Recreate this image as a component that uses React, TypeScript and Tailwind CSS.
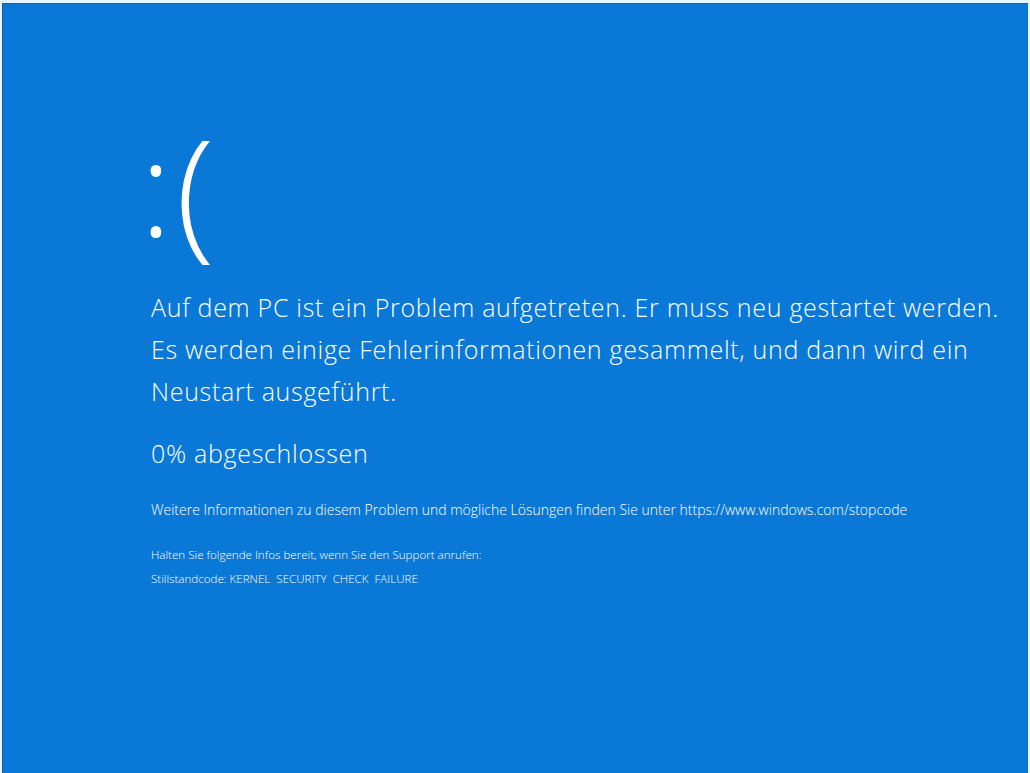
export default function App() {
  return (
    <div className="h-[773px] w-[1030px] overflow-hidden bg-[#e8f6fb] pl-[2px] pr-[2px] pt-[3px]">
      <div
        className="h-full border-l border-t border-[#1f5f8f] bg-[#0a78d6] pl-[148px] pt-[111px] text-white"
        style={{ fontFamily: '"Open Sans", "Noto Sans", sans-serif' }}
      >
        <div className="flex h-[162px] items-baseline font-light leading-none">
          <span className="-ml-[11px] -translate-y-[5px] text-[133px]">:</span>
          <span className="ml-[4px] text-[143px]">(</span>
        </div>
        <div className="mt-[9px] text-[25px] font-light leading-[42px] tracking-[0.7px]">
          <p>Auf dem PC ist ein Problem aufgetreten. Er muss neu gestartet werden.</p>
          <p>Es werden einige Fehlerinformationen gesammelt, und dann wird ein</p>
          <p>Neustart ausgeführt.</p>
        </div>
        <p className="mt-[20px] text-[25px] font-light leading-[42px] tracking-[0.7px]">0% abgeschlossen</p>
        <p className="mt-[27px] text-[14px] font-light leading-[18px]">
          Weitere Informationen zu diesem Problem und mögliche Lösungen finden Sie unter https://www.windows.com/stopcode
        </p>
        <p className="mt-[28px] text-[11.6px] font-light leading-[16px]">
          Halten Sie folgende Infos bereit, wenn Sie den Support anrufen:
        </p>
        <p className="mt-[8px] whitespace-pre text-[11.6px] font-light leading-[16px]">
          {"Stillstandcode: KERNEL  SECURITY  CHECK  FAILURE"}
        </p>
      </div>
    </div>
  );
}
